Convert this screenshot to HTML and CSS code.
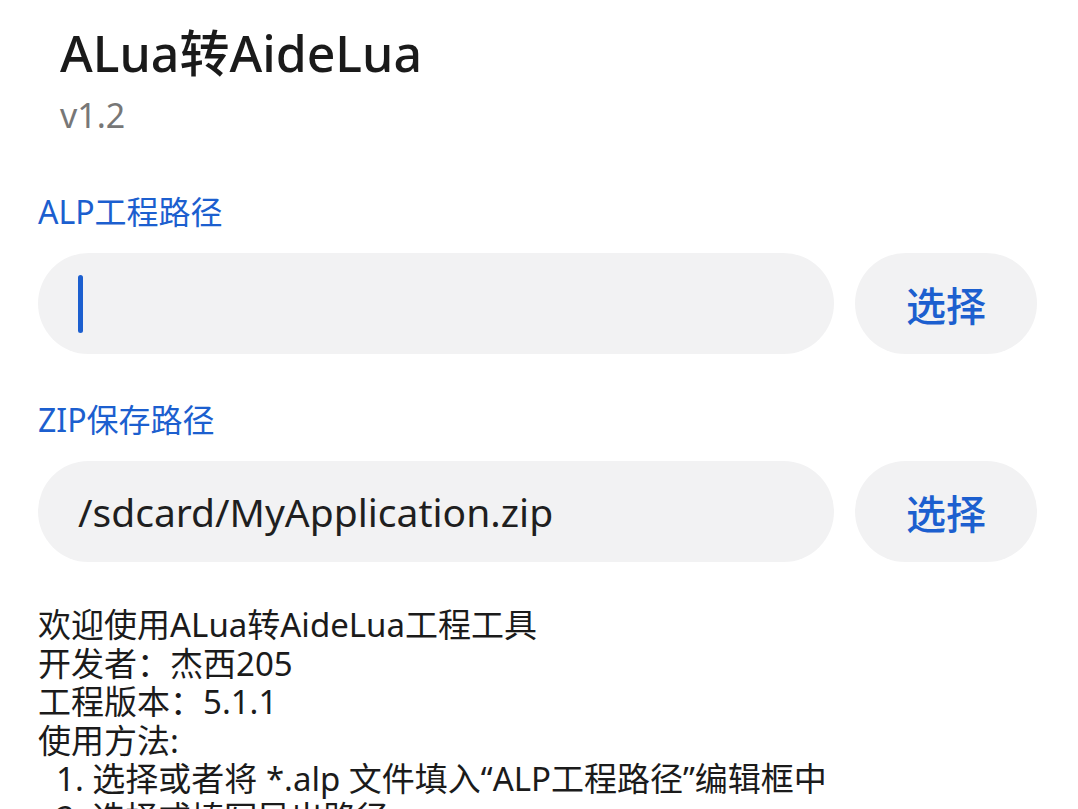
FILE: index.html
```html
<!DOCTYPE html>
<html lang="zh-CN">
<head>
<meta charset="utf-8">
<link rel="stylesheet" href="styles.css">
</head>
<body>
<div class="page">
  <header class="head">
    <h1 class="title">ALua转AideLua</h1>
    <div class="version">v1.2</div>
  </header>

  <section class="field">
    <label class="label">ALP工程路径</label>
    <div class="row">
      <div class="input"><span class="cursor"></span></div>
      <button class="btn">选择</button>
    </div>
  </section>

  <section class="field field2">
    <label class="label">ZIP保存路径</label>
    <div class="row">
      <div class="input"><span class="value">/sdcard/MyApplication.zip</span></div>
      <button class="btn">选择</button>
    </div>
  </section>

  <div class="info">
    <div>欢迎使用ALua转AideLua工程工具</div>
    <div>开发者：杰西205</div>
    <div>工程版本：5.1.1</div>
    <div>使用方法:</div>
    <div class="step">1. 选择或者将 *.alp 文件填入“ALP工程路径”编辑框中</div>
    <div class="step">2. 选择或填写导出路径</div>
  </div>
</div>
</body>
</html>
```

FILE: styles.css
```css
* { box-sizing: border-box; }
html, body {
  margin: 0;
  padding: 0;
  background: #ffffff;
  overflow: hidden;
  height: 809px;
}
body {
  font-family: "Noto Sans", "Noto Sans CJK SC", sans-serif;
  color: #1b1b1b;
}
.page {
  padding: 0 41px 0 38px;
}
.head {
  padding: 21px 0 0 22px;
}
.title {
  margin: 0;
  font-size: 50px;
  font-weight: 500;
  line-height: 64px;
  color: #1a1a1a;
}
.version {
  margin-top: 7px;
  font-size: 34px;
  line-height: 46px;
  color: #777777;
}
.field {
  margin-top: 52px;
}
.field2 {
  margin-top: 44px;
}
.label {
  display: block;
  font-size: 32px;
  line-height: 44px;
  color: #1c5fcf;
}
.row {
  display: flex;
  gap: 21px;
  margin-top: 19px;
}
.input {
  flex: 1;
  height: 101px;
  border-radius: 51px;
  background: #f2f2f3;
  display: flex;
  align-items: center;
  padding-left: 40px;
}
.cursor {
  width: 5px;
  height: 58px;
  border-radius: 3px;
  background: #1c5fcf;
}
.value {
  font-size: 39px;
  color: #1f1f1f;
}
.btn {
  width: 182px;
  height: 101px;
  border: none;
  border-radius: 51px;
  background: #f2f2f3;
  color: #1c5fcf;
  font-family: "Noto Sans CJK SC", sans-serif;
  font-size: 40px;
  font-weight: 500;
  padding: 0;
}
.info {
  margin-top: 44px;
  font-size: 33px;
  line-height: 38.5px;
  color: #1b1b1b;
}
.step {
  padding-left: 18px;
}
```
